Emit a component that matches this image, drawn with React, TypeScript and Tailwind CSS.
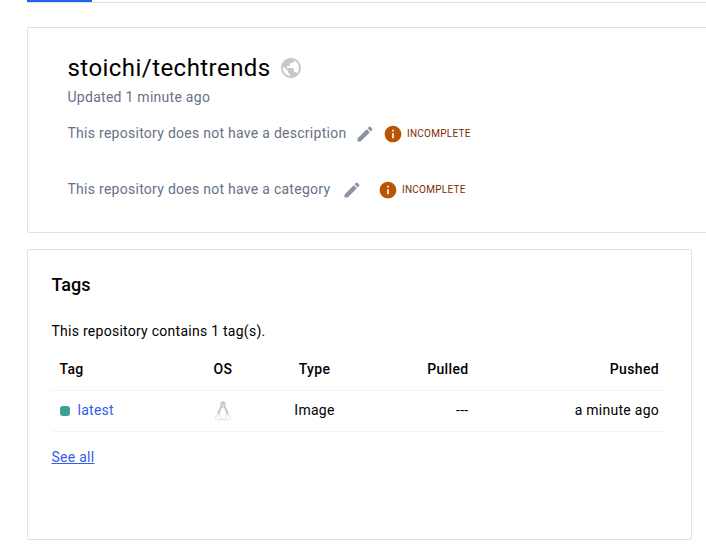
import React from "react";

function Globe() {
  return (
    <svg className="ml-2 size-6 shrink-0 fill-[#c8c8c8]" viewBox="0 0 24 24">
      <path d="M12 2C6.48 2 2 6.48 2 12s4.48 10 10 10 10-4.48 10-10S17.52 2 12 2zm-1 17.93c-3.95-.49-7-3.85-7-7.93 0-.62.08-1.21.21-1.79L9 15v1c0 1.1.9 2 2 2v1.93zm6.9-2.54c-.26-.81-1-1.39-1.9-1.39h-1v-3c0-.55-.45-1-1-1H8v-2h2c.55 0 1-.45 1-1V7h2c1.1 0 2-.9 2-2v-.41c2.93 1.19 5 4.06 5 7.41 0 2.08-.8 3.97-2.1 5.39z" />
    </svg>
  );
}

function Pencil() {
  return (
    <svg className="size-5 shrink-0 fill-[#8993a5]" viewBox="0 0 24 24">
      <path d="M3 17.25V21h3.75L17.81 9.94l-3.75-3.75L3 17.25zM20.71 7.04c.39-.39.39-1.02 0-1.41l-2.34-2.34c-.39-.39-1.02-.39-1.41 0l-1.83 1.83 3.75 3.75 1.83-1.83z" />
    </svg>
  );
}

function Incomplete() {
  return (
    <div className="flex items-center">
      <svg className="size-5 shrink-0 fill-[#b85504]" viewBox="0 0 24 24">
        <path d="M12 2C6.48 2 2 6.48 2 12s4.48 10 10 10 10-4.48 10-10S17.52 2 12 2zm1 15h-2v-6h2v6zm0-8h-2V7h2v2z" />
      </svg>
      <span className="ml-1 text-[10px] leading-5 tracking-[0.25px] text-[#7c2d00]">INCOMPLETE</span>
    </div>
  );
}

function Linux() {
  return (
    <svg className="h-5 w-4" viewBox="0 0 16 20">
      <path d="M8 .3C6.200.3 5.300 1.600 5.400 3.500c.1 2.300-.4 3.500-1.500 5.300-1 1.700-1.600 3.200-1.500 4.800L4.800 17h6.400l2.400-3.400c.1-1.600-.5-3.100-1.500-4.800-1.100-1.800-1.600-3-1.500-5.300C10.700 1.600 9.800.3 8 .3z" fill="#c4c4c4" />
      <path d="M8 6.200c-.9 0-1.500.8-2 2.200-.8 2.200-1.800 3.400-1.700 5.600.1 2.300 1.700 4.200 3.700 4.200s3.600-1.900 3.700-4.200c.1-2.200-.9-3.400-1.700-5.600-.5-1.400-1.100-2.200-2-2.200z" fill="#fcfcfc" />
      <path d="M6.300 3.900h1.200M8.500 3.900h1.200" stroke="#fafafa" strokeWidth="1" />
      <path d="M6.300 4.800 8 4.400l1.700.4L8 6.200z" fill="#e6e6e6" />
      <path d="M5 18.300c2 .5 4 .5 6 0" fill="none" stroke="#d0d0d0" strokeWidth=".8" />
      <path d="M2.900 13.300c1.200.1 1.800 1.400 2.600 2.600.9 1.300.5 2.900-.8 3.400-1.300.3-2.200-.5-3.800-.9-.9-.3-.3-1.300-.4-2.200 0-1.400 1.700-1 2.400-2.900zM13.100 13.300c-1.200.1-1.900 1.400-2.600 2.600-.8 1.300-.4 2.900.8 3.400 1.300.3 2.100-.6 3.600-1.300 1.100-.5.500-1.100.4-1.900-.1-1.300-1.600-.8-2.200-2.800z" fill="#fbfbfb" stroke="#dadada" strokeWidth=".6" />
    </svg>
  );
}

function RepositoryHeader() {
  return (
    <section className="mt-6 ml-[27px] h-[206px] rounded-l-xs border border-r-0 border-[#e1e2e6] pl-[39.5px]">
      <div className="mt-6 flex h-8 items-center">
        <h1 className="text-2xl leading-8 tracking-[0.45px] text-black">stoichi/techtrends</h1>
        <Globe />
      </div>
      <p className="mt-[3px] text-sm leading-5 tracking-[0.27px] text-[#677285]">Updated 1 minute ago</p>
      <div className="mt-4 flex h-5 items-center">
        <p className="w-[287.5px] text-sm leading-5 tracking-[0.27px] text-[#677285]">This repository does not have a description</p>
        <div className="flex items-center gap-2 pt-0.5">
          <Pencil />
          <Incomplete />
        </div>
      </div>
      <div className="mt-9 flex h-5 items-center">
        <p className="w-[274.5px] text-sm leading-5 tracking-[0.27px] text-[#677285]">This repository does not have a category</p>
        <div className="flex items-center gap-4 pt-0.5">
          <Pencil />
          <Incomplete />
        </div>
      </div>
    </section>
  );
}

function TagsPanel() {
  return (
    <section className="mt-4 ml-[27px] h-[291px] w-[665px] rounded-xs border border-[#e1e2e6] pt-[23px] pr-6 pl-[23.5px] text-sm tracking-[0.26px] text-black">
      <h2 className="text-lg leading-6 font-medium tracking-normal">Tags</h2>
      <p className="mt-6 leading-5">This repository contains 1 tag(s).</p>
      <table className="mt-2 w-[615.5px] table-fixed border-collapse">
        <colgroup>
          <col className="w-[126px]" />
          <col className="w-[91px]" />
          <col className="w-[92px]" />
          <col className="w-[116px]" />
          <col className="w-[190.5px]" />
        </colgroup>
        <thead>
          <tr className="h-[41px] border-b border-[#f3f4f6] tracking-[0.35px]">
            <th className="px-2 text-left font-medium">Tag</th>
            <th className="text-center font-medium">OS</th>
            <th className="text-center font-medium">Type</th>
            <th className="px-2 text-right font-medium">Pulled</th>
            <th className="px-2 text-right font-medium">Pushed</th>
          </tr>
        </thead>
        <tbody>
          <tr className="h-[41px] border-b border-[#f3f4f6]">
            <td className="px-2 pb-0.5">
              <span className="flex items-center gap-2">
                <span className="mt-[3px] size-2.5 rounded-[3px] bg-[#3ba08d]" />
                <a className="text-[#335eea]">latest</a>
              </span>
            </td>
            <td><span className="flex justify-center"><Linux /></span></td>
            <td className="pb-0.5 text-center">Image</td>
            <td className="px-2 pb-0.5 text-right">---</td>
            <td className="px-2 pb-0.5 text-right">a minute ago</td>
          </tr>
        </tbody>
      </table>
      <a className="mt-[15px] inline-block leading-5 text-[#335eea] underline">See all</a>
    </section>
  );
}

export default function App() {
  return (
    <main className="h-[556px] w-[706px] overflow-hidden bg-white font-[Roboto,'Liberation_Sans',sans-serif]">
      <div className="ml-[27px] h-[3px] border-b border-[#e1e2e6]">
        <div className="h-0.5 w-[65px] bg-[#1d63ed]" />
      </div>
      <RepositoryHeader />
      <TagsPanel />
    </main>
  );
}
